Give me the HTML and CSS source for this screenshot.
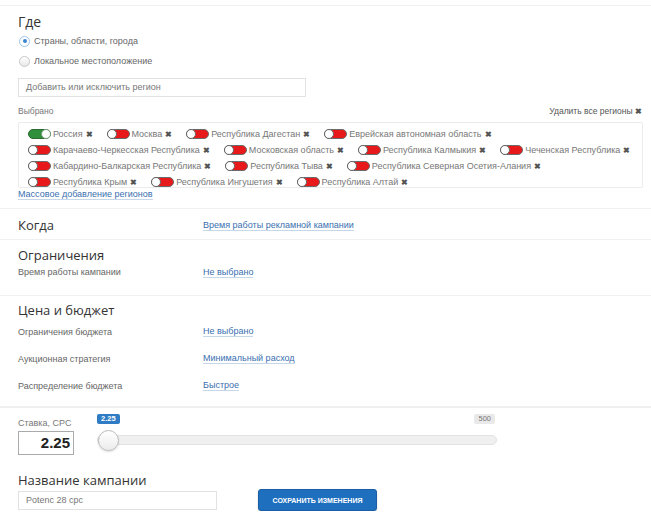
FILE: index.html
```html
<!DOCTYPE html>
<html lang="ru">
<head>
<meta charset="utf-8">
<link rel="stylesheet" href="styles.css">
</head>
<body>
<div class="topline"></div>

<section class="where">
  <h2 class="h">Где</h2>
  <label class="radio"><span class="dot on"></span>Страны, области, города</label>
  <label class="radio"><span class="dot"></span>Локальное местоположение</label>
  <div class="input region-input">Добавить или исключить регион</div>
  <div class="sel-head"><span>Выбрано</span><span>Удалить все регионы <b class="x">✖</b></span></div>
  <div class="regions">
    <div class="rrow">
      <span class="chip"><i class="tg green"></i>Россия<b class="x">✖</b></span>
      <span class="chip"><i class="tg"></i>Москва<b class="x">✖</b></span>
      <span class="chip"><i class="tg"></i>Республика Дагестан<b class="x">✖</b></span>
      <span class="chip"><i class="tg"></i>Еврейская автономная область<b class="x">✖</b></span>
    </div>
    <div class="rrow">
      <span class="chip"><i class="tg"></i>Карачаево-Черкесская Республика<b class="x">✖</b></span>
      <span class="chip"><i class="tg"></i>Московская область<b class="x">✖</b></span>
      <span class="chip"><i class="tg"></i>Республика Калмыкия<b class="x">✖</b></span>
      <span class="chip"><i class="tg"></i>Чеченская Республика<b class="x">✖</b></span>
    </div>
    <div class="rrow">
      <span class="chip"><i class="tg"></i>Кабардино-Балкарская Республика<b class="x">✖</b></span>
      <span class="chip"><i class="tg"></i>Республика Тыва<b class="x">✖</b></span>
      <span class="chip"><i class="tg"></i>Республика Северная Осетия-Алания<b class="x">✖</b></span>
    </div>
    <div class="rrow">
      <span class="chip"><i class="tg"></i>Республика Крым<b class="x">✖</b></span>
      <span class="chip"><i class="tg"></i>Республика Ингушетия<b class="x">✖</b></span>
      <span class="chip"><i class="tg"></i>Республика Алтай<b class="x">✖</b></span>
    </div>
  </div>
  <a class="link mass">Массовое добавление регионов</a>
</section>

<section class="sec when">
  <div class="row"><h2 class="h2 lbl">Когда</h2><a class="link">Время работы рекламной кампании</a></div>
</section>

<section class="sec limits">
  <h2 class="h2">Ограничения</h2>
  <div class="row small"><span class="lbl">Время работы кампании</span><a class="link">Не выбрано</a></div>
</section>

<section class="sec budget">
  <h2 class="h2">Цена и бюджет</h2>
  <div class="row brow"><span class="lbl">Ограничения бюджета</span><a class="link">Не выбрано</a></div>
  <div class="row brow"><span class="lbl">Аукционная стратегия</span><a class="link">Минимальный расход</a></div>
  <div class="row brow"><span class="lbl">Распределение бюджета</span><a class="link">Быстрое</a></div>
</section>

<section class="sec bid">
  <div class="bid-left">
    <div class="bid-label">Ставка, CPC</div>
    <div class="bid-input">2.25</div>
  </div>
  <div class="slider">
    <div class="badges"><span class="badge cur">2.25</span><span class="badge max">500</span></div>
    <div class="track"><span class="thumb"></span></div>
  </div>
</section>

<section class="name">
  <h2 class="h2">Название кампании</h2>
  <div class="name-row">
    <div class="input name-input">Potenc 28 cpc</div>
    <button class="save">СОХРАНИТЬ ИЗМЕНЕНИЯ</button>
  </div>
</section>
</body>
</html>
```

FILE: styles.css
```css
* { box-sizing: border-box; }
body {
  margin: 0;
  background: #fff;
  font-family: "Liberation Sans", Arial, sans-serif;
  color: #666;
  font-size: 9px;
}
.topline {
  height: 6px;
  border-bottom: 1px solid #f0f0f0;
}
h2 { margin: 0; font-weight: normal; }
.h {
  font-family: "Open Sans", "Liberation Sans", sans-serif;
  font-size: 14px;
  color: #333;
  line-height: 18px;
  margin: 7px 0 0 0;
}
.h2 {
  font-family: "Open Sans", "Liberation Sans", sans-serif;
  font-size: 13px;
  color: #333;
  line-height: 16px;
}
.where { padding: 0 9px 0 18px; }
.radio {
  display: flex;
  align-items: center;
  height: 20px;
  color: #666;
}
.dot {
  width: 11px; height: 11px;
  border-radius: 50%;
  border: 1px solid #c8c8c8;
  background: linear-gradient(#fff, #e8e8e8);
  margin-right: 4px;
  margin-left: 1px;
  position: relative;
}
.dot.on { border-color: #9cc3e8; background: #fff; }
.dot.on::after {
  content: "";
  position: absolute;
  left: 2.5px; top: 2.5px;
  width: 4px; height: 4px;
  border-radius: 50%;
  background: #3b86d0;
}
.input {
  border: 1px solid #e2e2e2;
  height: 19px;
  line-height: 17px;
  padding-left: 7px;
  color: #777;
  background: #fff;
}
.region-input { width: 288px; margin-top: 7px; }
.sel-head {
  display: flex;
  justify-content: space-between;
  margin-top: 8px;
  line-height: 12px;
  color: #777;
  font-size: 8.5px;
}
.sel-head span:last-child { color: #555; }
.x { color: #555; font-weight: bold; font-size: 8px; }
.regions {
  margin-top: 4px;
  border: 1px solid #ececec;
  border-radius: 2px;
  padding: 3px 10px 3px 9px;
  width: 625px;
  height: 66px;
}
.rrow {
  display: flex;
  height: 16px;
  align-items: center;
  gap: 14px;
  white-space: nowrap;
}
.chip { display: flex; align-items: center; color: #777; }
.chip .x { margin-left: 3px; }
.tg {
  display: inline-block;
  width: 23px; height: 10px;
  border-radius: 5px;
  background: #e8191b;
  border: 1px solid #6a6a6a;
  position: relative;
  margin-right: 2px;
}
.tg::before {
  content: "";
  position: absolute;
  left: -1px; top: -1px;
  width: 10px; height: 10px;
  border-radius: 50%;
  background: #fff;
  border: 1px solid #666;
  box-sizing: border-box;
}
.tg.green { background: #2f8f3a; border-color: #2a6b31; }
.tg.green::before { left: auto; right: -1px; border-color: #7a9a7d; }
.link {
  color: #3a6fb0;
  border-bottom: 1px solid #c7d7ea;
  text-decoration: none;
  line-height: 10px;
}
.mass { display: inline-block; margin-top: 1px; }
.sec { border-top: 1px solid #f0f0f0; padding-left: 18px; }
.when { margin-top: 8px; height: 31px; padding-top: 8px; }
.row { display: flex; align-items: center; }
.lbl { width: 185px; flex: none; }
.when .row { height: 16px; }
.limits { height: 56px; padding-top: 7px; }
.small { height: 18px; }
.budget { height: 111px; padding-top: 6px; }
.brow { height: 27px; }
.bid {
  border-top: 2px solid #efefef;
  display: flex;
  height: 62px;
  padding-top: 9px;
}
.bid-left { width: 78px; flex: none; }
.bid-label { color: #777; line-height: 12px; }
.bid-input {
  margin-top: 2px;
  width: 56px; height: 24px;
  border: 1px solid #aaa;
  font-size: 15px;
  font-weight: bold;
  color: #222;
  text-align: right;
  padding-right: 3px;
  line-height: 22px;
}
.slider { width: 400px; margin-left: 1px; margin-top: -3px; }
.badges { display: flex; justify-content: space-between; height: 10px; }
.badge {
  font-size: 7.5px;
  line-height: 10px;
  border-radius: 2px;
}
.badge.cur { background: #2f7cc4; color: #fff; font-weight: bold; padding: 0 4px; }
.badge.max { background: #e9e9e9; color: #777; margin-right: 2px; padding: 0 4px; }
.track {
  margin-top: 11px;
  height: 10px;
  border-radius: 5px;
  background: #f0f0f0;
  border: 1px solid #e2e2e2;
  position: relative;
}
.thumb {
  position: absolute;
  left: 0; top: -6px;
  width: 21px; height: 21px;
  border-radius: 50%;
  background: linear-gradient(#fff, #ececec);
  border: 1px solid #bbb;
  box-shadow: 0 1px 2px rgba(0,0,0,0.15);
}
.name { padding: 0 18px; margin-top: 4px; }
.name .h2 { line-height: 17px; }
.name-row { display: flex; align-items: center; }
.name-input { width: 199px; height: 19px; }
.save {
  margin-left: 41px;
  width: 119px; height: 22px;
  background: #1f6fbf;
  border: 1px solid #1a5ea3;
  border-radius: 3px;
  color: #fff;
  font-family: "Liberation Sans", Arial, sans-serif;
  font-weight: bold;
  font-size: 7px;
  padding: 0;
  box-shadow: 0 1px 2px rgba(0,0,0,0.2);
}
```
